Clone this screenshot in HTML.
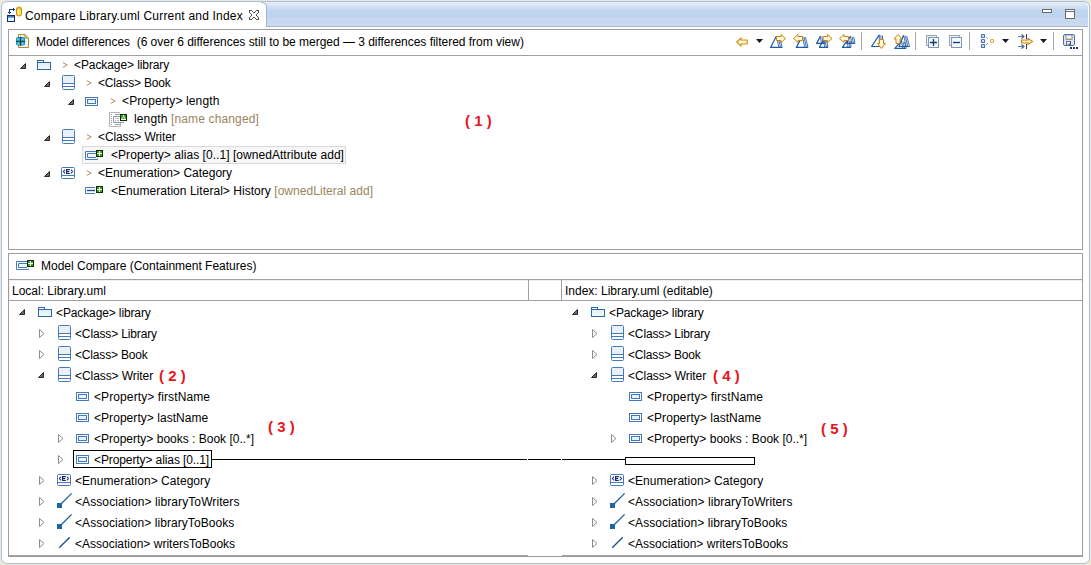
<!DOCTYPE html><html><head><meta charset="utf-8"><style>
html,body{margin:0;padding:0;}
body{width:1091px;height:565px;position:relative;overflow:hidden;background:#ECE9D8;}
.frame{position:absolute;left:1px;top:1px;width:1087px;height:561px;border:1px solid #A9BFE6;border-radius:6px;background:#fff;}
.tabbar{position:absolute;left:262px;top:2px;width:826px;height:24px;border-bottom:1px solid #a9b6cc;border-top-right-radius:5px;background:linear-gradient(#e6eef9 0px,#d6e3f5 4px,#bfd4ef 9px,#bdd3ee 15px,#c8d8f0 16px,#c9d9f1 24px);}
.t{position:absolute;font-family:"Liberation Sans",sans-serif;font-size:12px;line-height:14px;white-space:pre;color:#000;}
.title{font-size:12px;}
.gt{color:#b98a4a;}
.dec{color:#9a8560;}
.r{position:absolute;box-sizing:content-box;}
.i{position:absolute;overflow:visible;}
.ann{position:absolute;font-family:"Liberation Sans",sans-serif;font-weight:bold;font-size:15px;line-height:17px;white-space:pre;color:#E8141C;}
</style></head><body><div class="frame"></div>
<div class="tabbar"></div>
<svg class="i" style="left:258px;top:2px" width="10" height="26" viewBox="0 0 10 26" ><path d="M0 0 H3 Q8 0 8 5 V25 H0 Z" fill="#fff"/><path d="M3 0.5 Q8.5 0.5 8.5 5 V24.5" fill="none" stroke="#a3b4cf" stroke-width="1"/></svg>
<svg class="i" style="left:7px;top:7px" width="16" height="16" viewBox="0 0 16 16" ><path d="M6 1h1v1h-1zM2 2h1v1h-1zM3 2h1v1h-1zM4 2h1v1h-1zM5 2h1v1h-1zM6 2h1v1h-1zM7 2h1v1h-1zM2 3h1v1h-1zM6 3h1v1h-1zM2 4h1v1h-1zM1 5h1v1h-1zM2 5h1v1h-1zM3 5h1v1h-1zM2 6h1v1h-1z" fill="#1238a0" shape-rendering="crispEdges"/><rect x="0.5" y="8.5" width="7" height="6" fill="#e2f6ff" stroke="#1c2c6a"/><rect x="1" y="9" width="6" height="1.6" fill="#3f78d0"/><rect x="9.5" y="0.2" width="5" height="8.6" rx="1.6" fill="#fbe15a" stroke="#c98a12"/><path d="M10 1.8h4" stroke="#d89a20" stroke-width="0.8"/><path d="M11.5 3v4.5" stroke="#fff6b0" stroke-width="1"/></svg>
<div class="t title" style="left:25px;top:9px;letter-spacing:0.2px">Compare Library.uml Current and Index</div>
<svg class="i" style="left:249px;top:10px" width="10" height="10" viewBox="0 0 10 10" ><path d="M0 0h1v1h-1zM1 0h1v1h-1zM2 0h1v1h-1zM7 0h1v1h-1zM8 0h1v1h-1zM9 0h1v1h-1zM0 1h1v1h-1zM3 1h1v1h-1zM6 1h1v1h-1zM9 1h1v1h-1zM0 2h1v1h-1zM4 2h1v1h-1zM5 2h1v1h-1zM9 2h1v1h-1zM1 3h1v1h-1zM8 3h1v1h-1zM2 4h1v1h-1zM7 4h1v1h-1zM2 5h1v1h-1zM7 5h1v1h-1zM1 6h1v1h-1zM8 6h1v1h-1zM0 7h1v1h-1zM4 7h1v1h-1zM5 7h1v1h-1zM9 7h1v1h-1zM0 8h1v1h-1zM3 8h1v1h-1zM6 8h1v1h-1zM9 8h1v1h-1zM0 9h1v1h-1zM1 9h1v1h-1zM2 9h1v1h-1zM7 9h1v1h-1zM8 9h1v1h-1zM9 9h1v1h-1z" fill="#555" shape-rendering="crispEdges"/></svg>
<div class="r" style="left:1042px;top:9px;width:8px;height:2px;border:1px solid #6a6a6a;background:#fff"></div>
<div class="r" style="left:1065px;top:9px;width:8px;height:8px;border:1px solid #6a6a6a;background:#fff"></div>
<div class="r" style="left:1066px;top:11px;width:8px;height:1px;background:#6a6a6a"></div>
<div class="r" style="left:8px;top:29px;width:1073px;height:219px;border:1px solid #9c9c9c;background:#fff"></div>
<div class="r" style="left:9px;top:55px;width:1073px;height:1px;background:#a0a0a0"></div>
<svg class="i" style="left:15px;top:34px" width="16" height="15" viewBox="0 0 16 15" ><path d="M3.5 0.5 H10 L13.5 4 V13.5 H3.5 Z" fill="#eef2fa" stroke="#b38a32"/><path d="M10 0.5 V4 H13.5" fill="#e6c880" stroke="#b38a32"/><rect x="1" y="3" width="9" height="8.6" rx="1.8" fill="#1b93ad"/><rect x="2.3" y="4.3" width="2.2" height="2.2" fill="#6fcde2"/><rect x="6.5" y="4.3" width="2.2" height="2.2" fill="#6fcde2"/><rect x="2.3" y="8.4" width="2.2" height="2.2" fill="#6fcde2"/><rect x="6.5" y="8.4" width="2.2" height="2.2" fill="#6fcde2"/><path d="M5.5 2.6v9.4M0.8 7.4h9.4" stroke="#1d3550" stroke-width="0.9"/></svg>
<div class="t" style="left:36px;top:35px;letter-spacing:-0.025px">Model differences  (6 over 6 differences still to be merged — 3 differences filtered from view)</div>
<svg class="i" style="left:736px;top:37px" width="12" height="10" viewBox="0 0 12 10" ><path d="M0.8 5 L5 0.8 V3 H11.2 V7 H5 V9.2 Z" fill="#fff3c8" stroke="#cf8a18" stroke-width="1.1" stroke-linejoin="round"/></svg>
<svg class="i" style="left:756px;top:39px" width="7" height="4" viewBox="0 0 7 4" ><path d="M0 0 H7 L3.5 4 Z" fill="#1a1a1a"/></svg>
<svg class="i" style="left:770px;top:34px" width="17" height="15" viewBox="0 0 17 15" ><path d="M6.3 2.2 L0.6 13.4 H12.2" fill="none" stroke="#1f5aa6" stroke-width="1.2" stroke-linejoin="round"/><path d="M6.3 2.2 L9.0 13.4" stroke="#1f5aa6" stroke-width="0.85"/><path d="M7.9 2.6 L10.6 13.4" stroke="#1f5aa6" stroke-width="0.85"/><path d="M9.5 3.0 L12.2 13.4" stroke="#1f5aa6" stroke-width="0.85"/><path d="M6.5 2.5 H11 V0.5 L15.5 4.5 L11 8.5 V6.5 H6.5 Z" fill="#fff6d6" stroke="#c98412" stroke-width="1.0" stroke-linejoin="miter"/></svg>
<svg class="i" style="left:793px;top:34px" width="17" height="15" viewBox="0 0 17 15" ><path d="M9.3 2.2 L3.3 13.4 H15" fill="none" stroke="#1f5aa6" stroke-width="1.2" stroke-linejoin="round"/><path d="M9.3 2.2 L11.8 13.4" stroke="#1f5aa6" stroke-width="0.85"/><path d="M10.9 2.6 L13.4 13.4" stroke="#1f5aa6" stroke-width="0.85"/><path d="M12.5 3.0 L15.0 13.4" stroke="#1f5aa6" stroke-width="0.85"/><path d="M9.5 2.5 H5 V0.5 L0.5 4.5 L5 8.5 V6.5 H9.5 Z" fill="#fff6d6" stroke="#c98412" stroke-width="1.0" stroke-linejoin="miter"/></svg>
<svg class="i" style="left:816px;top:34px" width="17" height="15" viewBox="0 0 17 15" ><path d="M4.4 2.2 L0.6 9.4 H8.6" fill="none" stroke="#1f5aa6" stroke-width="1.2" stroke-linejoin="round"/><path d="M4.4 2.2 L5.3999999999999995 9.4" stroke="#1f5aa6" stroke-width="0.85"/><path d="M6.0 2.6 L7.0 9.4" stroke="#1f5aa6" stroke-width="0.85"/><path d="M7.6000000000000005 3.0 L8.6 9.4" stroke="#1f5aa6" stroke-width="0.85"/><path d="M7.4 6.2 L3.4 13.4 H12" fill="none" stroke="#1f5aa6" stroke-width="1.2" stroke-linejoin="round"/><path d="M7.4 6.2 L8.8 13.4" stroke="#1f5aa6" stroke-width="0.85"/><path d="M9.0 6.6000000000000005 L10.4 13.4" stroke="#1f5aa6" stroke-width="0.85"/><path d="M10.600000000000001 7.0 L12.0 13.4" stroke="#1f5aa6" stroke-width="0.85"/><path d="M7.0 2.5 H11.5 V0.5 L16.0 4.5 L11.5 8.5 V6.5 H7.0 Z" fill="#fff6d6" stroke="#c98412" stroke-width="1.0" stroke-linejoin="miter"/></svg>
<svg class="i" style="left:839px;top:34px" width="17" height="15" viewBox="0 0 17 15" ><path d="M11.5 2.2 L7.5 9.4 H16" fill="none" stroke="#1f5aa6" stroke-width="1.2" stroke-linejoin="round"/><path d="M11.5 2.2 L12.8 9.4" stroke="#1f5aa6" stroke-width="0.85"/><path d="M13.1 2.6 L14.4 9.4" stroke="#1f5aa6" stroke-width="0.85"/><path d="M14.7 3.0 L16.0 9.4" stroke="#1f5aa6" stroke-width="0.85"/><path d="M8.5 6.2 L3.4 13.4 H12" fill="none" stroke="#1f5aa6" stroke-width="1.2" stroke-linejoin="round"/><path d="M8.5 6.2 L8.8 13.4" stroke="#1f5aa6" stroke-width="0.85"/><path d="M10.1 6.6000000000000005 L10.4 13.4" stroke="#1f5aa6" stroke-width="0.85"/><path d="M11.7 7.0 L12.0 13.4" stroke="#1f5aa6" stroke-width="0.85"/><path d="M9.5 2.5 H5 V0.5 L0.5 4.5 L5 8.5 V6.5 H9.5 Z" fill="#fff6d6" stroke="#c98412" stroke-width="1.0" stroke-linejoin="miter"/></svg>
<div class="r" style="left:861px;top:32px;width:1px;height:18px;background:#a8a8a8"></div>
<svg class="i" style="left:871px;top:34px" width="16" height="16" viewBox="0 0 16 16" ><path d="M8.3 0.8 L0.6 12.5 H11.5" fill="none" stroke="#1f5aa6" stroke-width="1.2" stroke-linejoin="round"/><path d="M8.3 0.8 L8.3 12.5" stroke="#1f5aa6" stroke-width="0.85"/><path d="M9.9 1.2000000000000002 L9.9 12.5" stroke="#1f5aa6" stroke-width="0.85"/><path d="M11.5 1.6 L11.5 12.5" stroke="#1f5aa6" stroke-width="0.85"/><path d="M8.5 5.5 V9.5 H6.5 L10.5 14.5 L14.5 9.5 H12.5 V5.5 Z" fill="#fff6d6" stroke="#c98412" stroke-width="1.0"/></svg>
<svg class="i" style="left:893px;top:34px" width="17" height="16" viewBox="0 0 17 16" ><path d="M10.5 1.2 L6 12.5 H16.5" fill="none" stroke="#1f5aa6" stroke-width="1.2" stroke-linejoin="round"/><path d="M10.5 1.2 L13.3 12.5" stroke="#1f5aa6" stroke-width="0.85"/><path d="M12.1 1.6 L14.9 12.5" stroke="#1f5aa6" stroke-width="0.85"/><path d="M13.7 2.0 L16.5 12.5" stroke="#1f5aa6" stroke-width="0.85"/><path d="M8.3 7.2 L1.8 14.3 H13.2" fill="none" stroke="#1f5aa6" stroke-width="1.2" stroke-linejoin="round"/><path d="M8.3 7.2 L10.0 14.3" stroke="#1f5aa6" stroke-width="0.85"/><path d="M9.9 7.6000000000000005 L11.6 14.3" stroke="#1f5aa6" stroke-width="0.85"/><path d="M11.5 8.0 L13.2 14.3" stroke="#1f5aa6" stroke-width="0.85"/><path d="M3.0 9.5 V5 H1.0 L5.0 0.5 L9.0 5 H7.0 V9.5 Z" fill="#fff6d6" stroke="#c98412" stroke-width="1.0"/></svg>
<div class="r" style="left:915px;top:32px;width:1px;height:18px;background:#a8a8a8"></div>
<svg class="i" style="left:926px;top:35px" width="14" height="14" viewBox="0 0 14 14" ><rect x="0.5" y="0.5" width="10" height="10" fill="#e6f5fc" stroke="#98a6bc"/><rect x="2.5" y="2.5" width="10" height="10" fill="#effafe" stroke="#8794aa"/><path d="M4 7.5h7M7.5 4v7" stroke="#0c3c74" stroke-width="1.3"/></svg>
<svg class="i" style="left:949px;top:35px" width="14" height="14" viewBox="0 0 14 14" ><rect x="0.5" y="0.5" width="10" height="10" fill="#e6f5fc" stroke="#98a6bc"/><rect x="2.5" y="2.5" width="10" height="10" fill="#effafe" stroke="#8794aa"/><path d="M4 7.5h7" stroke="#0c3c74" stroke-width="1.3"/></svg>
<div class="r" style="left:969px;top:32px;width:1px;height:18px;background:#a8a8a8"></div>
<svg class="i" style="left:981px;top:34px" width="14" height="14" viewBox="0 0 14 14" ><rect x="0.5" y="0.5" width="3" height="3" rx="0.6" fill="#d8eef0" stroke="#4a72b0" stroke-width="1.2"/><rect x="0.5" y="5.5" width="3" height="3" rx="0.6" fill="#d8eef0" stroke="#4a72b0" stroke-width="1.2"/><rect x="0.5" y="10.5" width="3" height="3" rx="0.6" fill="#d8eef0" stroke="#4a72b0" stroke-width="1.2"/><path d="M5 3 L7.5 5.5 M5 11 L7.5 8.5" stroke="#4a72b0" stroke-width="0.9" stroke-dasharray="1 0.8"/><rect x="9.5" y="5.5" width="3" height="3" rx="1" fill="#fff4c0" stroke="#c8940c"/></svg>
<svg class="i" style="left:1002px;top:39px" width="7" height="4" viewBox="0 0 7 4" ><path d="M0 0 H7 L3.5 4 Z" fill="#1a1a1a"/></svg>
<svg class="i" style="left:1018px;top:34px" width="16" height="16" viewBox="0 0 16 16" ><path d="M0 2.5h5" stroke="#3b8ad0" stroke-width="1"/><path d="M3.5 0.5 L6 2.5 L3.5 4.5" fill="none" stroke="#505a68" stroke-width="1.1"/><path d="M8.5 0v5" stroke="#2a3a60" stroke-width="1"/><path d="M0 12.5h5" stroke="#3b8ad0" stroke-width="1"/><path d="M3.5 10.5 L6 12.5 L3.5 14.5" fill="none" stroke="#505a68" stroke-width="1.1"/><path d="M8.5 10v5" stroke="#2a3a60" stroke-width="1"/><path d="M3.5 6 H10 V4.5 L14.5 7.5 L10 10.5 V9 H3.5 Z" fill="#fff1c2" stroke="#c98412" stroke-width="1.1"/></svg>
<svg class="i" style="left:1040px;top:39px" width="7" height="4" viewBox="0 0 7 4" ><path d="M0 0 H7 L3.5 4 Z" fill="#1a1a1a"/></svg>
<div class="r" style="left:1053px;top:32px;width:1px;height:18px;background:#a8a8a8"></div>
<svg class="i" style="left:1063px;top:34px" width="16" height="16" viewBox="0 0 16 16" ><rect x="0.5" y="0.5" width="11" height="11" rx="1.5" fill="#dfe6f2" stroke="#5572a8"/><rect x="3" y="1" width="6" height="4.5" fill="#f4f8fc" stroke="#6a7890" stroke-width="0.8"/><rect x="3.3" y="4" width="5.4" height="1.2" fill="#f0c870"/><rect x="3" y="7" width="5" height="4.5" fill="#3a5a98"/><rect x="3.8" y="7.8" width="3" height="2" fill="#fff"/><rect x="3.8" y="9.8" width="2" height="1.2" fill="#f0c870"/><rect x="7" y="13" width="2" height="2" fill="#1e3a78"/><rect x="10" y="13" width="2" height="2" fill="#1e3a78"/><rect x="13" y="13" width="2" height="2" fill="#1e3a78"/></svg>
<svg class="i" style="left:20px;top:63px" width="6" height="6" viewBox="0 0 6 6" ><path d="M5.5 0.5 L5.5 5.5 L0.5 5.5 Z" fill="#6a6a6a" stroke="#2a2a2a" stroke-width="1" stroke-linejoin="round"/></svg>
<svg class="i" style="left:37px;top:60px" width="14" height="10" viewBox="0 0 14 10" ><defs><linearGradient id="fg" x1="0" y1="0" x2="0" y2="1"><stop offset="0" stop-color="#dfeefb"/><stop offset="1" stop-color="#f2f8fd"/></linearGradient></defs><rect x="0.5" y="0.5" width="6" height="2" fill="#fff" stroke="#2d69a8"/><rect x="0.5" y="2.5" width="13" height="7" fill="url(#fg)" stroke="#2d69a8"/></svg>
<svg class="i" style="left:62px;top:62px" width="6" height="6" viewBox="0 0 6 6" ><path d="M0.8 0.6 L5.2 3 L0.8 5.4" fill="none" stroke="#a8763e" stroke-width="0.85"/></svg>
<div class="t" style="left:74px;top:58px;letter-spacing:-0.09px;">&lt;Package&gt; library</div>
<svg class="i" style="left:44px;top:81px" width="6" height="6" viewBox="0 0 6 6" ><path d="M5.5 0.5 L5.5 5.5 L0.5 5.5 Z" fill="#6a6a6a" stroke="#2a2a2a" stroke-width="1" stroke-linejoin="round"/></svg>
<svg class="i" style="left:62px;top:75px" width="13" height="15" viewBox="0 0 13 15" ><rect x="0.5" y="0.5" width="12" height="14" rx="1" fill="#fff" stroke="#4679BA"/><rect x="1" y="1" width="11" height="7" fill="#e9f0f8"/><path d="M0.5 8.5h12M0.5 11.5h12" stroke="#4679BA"/></svg>
<svg class="i" style="left:86px;top:80px" width="6" height="6" viewBox="0 0 6 6" ><path d="M0.8 0.6 L5.2 3 L0.8 5.4" fill="none" stroke="#a8763e" stroke-width="0.85"/></svg>
<div class="t" style="left:98px;top:76px;letter-spacing:-0.17px;">&lt;Class&gt; Book</div>
<svg class="i" style="left:68px;top:99px" width="6" height="6" viewBox="0 0 6 6" ><path d="M5.5 0.5 L5.5 5.5 L0.5 5.5 Z" fill="#6a6a6a" stroke="#2a2a2a" stroke-width="1" stroke-linejoin="round"/></svg>
<svg class="i" style="left:85px;top:97px" width="13" height="9" viewBox="0 0 13 9" ><rect x="0.5" y="0.5" width="12" height="8" fill="#fff" stroke="#4679BA"/><rect x="2.5" y="2.5" width="8" height="4" fill="#e6f4fb" stroke="#4679BA"/></svg>
<svg class="i" style="left:110px;top:98px" width="6" height="6" viewBox="0 0 6 6" ><path d="M0.8 0.6 L5.2 3 L0.8 5.4" fill="none" stroke="#a8763e" stroke-width="0.85"/></svg>
<div class="t" style="left:122px;top:94px;letter-spacing:0.12px;">&lt;Property&gt; length</div>
<svg class="i" style="left:109px;top:112px" width="18" height="15" viewBox="0 0 18 15" ><path d="M0.5 14.5 V0.5 H11" fill="none" stroke="#b4b4b4"/><path d="M0.5 14.5 H11.5 V11" fill="none" stroke="#b4b4b4"/><path d="M2 2.5h1M2 4.5h1M2 6.5h1M2 8.5h1M2 10.5h1M2 12.5h1" stroke="#8f9aa8"/><path d="M6 2.5h5M6 12.5h5" stroke="#9aa4b0"/><path d="M15 10.5 H4.5 V4.5 H11" fill="none" stroke="#8f98a4"/><path d="M6 6.5h1M8 6.5h2M6 8.5h1M8 8.5h2" stroke="#a8b0bc"/><rect x="11.5" y="2.5" width="6" height="6" fill="#3f9c18" stroke="#063000"/><rect x="14" y="3" width="1" height="1.2" fill="#fff"/><path d="M14.5 4.5 L12.8 6.8 M14.5 4.5 L16.2 6.8" stroke="#fff" stroke-width="0.9"/><path d="M12 7.5h5" stroke="#fff"/></svg>
<div class="t" style="left:134px;top:112px;letter-spacing:0.14px;">length <span class="dec">[name changed]</span></div>
<svg class="i" style="left:44px;top:135px" width="6" height="6" viewBox="0 0 6 6" ><path d="M5.5 0.5 L5.5 5.5 L0.5 5.5 Z" fill="#6a6a6a" stroke="#2a2a2a" stroke-width="1" stroke-linejoin="round"/></svg>
<svg class="i" style="left:62px;top:129px" width="13" height="15" viewBox="0 0 13 15" ><rect x="0.5" y="0.5" width="12" height="14" rx="1" fill="#fff" stroke="#4679BA"/><rect x="1" y="1" width="11" height="7" fill="#e9f0f8"/><path d="M0.5 8.5h12M0.5 11.5h12" stroke="#4679BA"/></svg>
<svg class="i" style="left:86px;top:134px" width="6" height="6" viewBox="0 0 6 6" ><path d="M0.8 0.6 L5.2 3 L0.8 5.4" fill="none" stroke="#a8763e" stroke-width="0.85"/></svg>
<div class="t" style="left:98px;top:130px;letter-spacing:-0.11px;">&lt;Class&gt; Writer</div>
<div class="r" style="left:82px;top:146px;width:262px;height:16px;border:1px solid #d9d9d9;background:#f7f7f7"></div>
<svg class="i" style="left:85px;top:150px" width="18" height="11" viewBox="0 0 18 11" ><path d="M11 1.5 H0.5 V9.5 H12.5 V8.5" fill="none" stroke="#4679BA"/><path d="M11 3.5 H2.5 V7.5 H11" fill="#eef6fb" stroke="#4679BA"/><rect x="11.5" y="0.5" width="6" height="6" fill="#3f9c18" stroke="#063000"/><path d="M14 1h1v5h-1zM12 3h5v1h-5z" fill="#fff" shape-rendering="crispEdges"/></svg>
<div class="t" style="left:111px;top:148px;letter-spacing:0.05px;">&lt;Property&gt; alias [0..1] [ownedAttribute add]</div>
<svg class="i" style="left:44px;top:171px" width="6" height="6" viewBox="0 0 6 6" ><path d="M5.5 0.5 L5.5 5.5 L0.5 5.5 Z" fill="#6a6a6a" stroke="#2a2a2a" stroke-width="1" stroke-linejoin="round"/></svg>
<svg class="i" style="left:61px;top:167px" width="14" height="12" viewBox="0 0 14 12" ><rect x="0.5" y="0.5" width="13" height="11" rx="1" fill="#fff" stroke="#4679BA"/><path d="M0.5 8.5h13" stroke="#4679BA"/><path d="M5 2.6h3.8M5 4.6h3.3M5 6.5h3.8M5.6 2v5" stroke="#1c2466" stroke-width="1.15"/><path d="M4 2.6 L2.4 4.5 L4 6.4 M9.9 2.6 L11.5 4.5 L9.9 6.4" fill="none" stroke="#243a80" stroke-width="1.1"/></svg>
<svg class="i" style="left:86px;top:170px" width="6" height="6" viewBox="0 0 6 6" ><path d="M0.8 0.6 L5.2 3 L0.8 5.4" fill="none" stroke="#a8763e" stroke-width="0.85"/></svg>
<div class="t" style="left:98px;top:166px;">&lt;Enumeration&gt; Category</div>
<svg class="i" style="left:85px;top:186px" width="18" height="9" viewBox="0 0 18 9" ><path d="M10 1.5 H0.5 V7.5 H10" fill="none" stroke="#4679BA"/><path d="M2 4.5 H10" stroke="#1f4f8a" stroke-width="1.4"/><rect x="11.5" y="0.5" width="6" height="6" fill="#3f9c18" stroke="#063000"/><path d="M14 1h1v5h-1zM12 3h5v1h-5z" fill="#fff" shape-rendering="crispEdges"/></svg>
<div class="t" style="left:111px;top:184px;letter-spacing:0.04px;">&lt;Enumeration Literal&gt; History <span class="dec">[ownedLiteral add]</span></div>
<div class="ann" style="left:465px;top:112px">( 1 )</div>
<div class="r" style="left:8px;top:253px;width:1073px;height:302px;border:1px solid #9c9c9c;border-bottom:1px solid #9a9a9a;background:#fff"></div>
<svg class="i" style="left:16px;top:260px" width="18" height="11" viewBox="0 0 18 11" ><path d="M11 1.5 H0.5 V9.5 H12.5 V8.5" fill="none" stroke="#4679BA"/><path d="M11 3.5 H2.5 V7.5 H11" fill="#eef6fb" stroke="#4679BA"/><rect x="11.5" y="0.5" width="6" height="6" fill="#3f9c18" stroke="#063000"/><path d="M14 1h1v5h-1zM12 3h5v1h-5z" fill="#fff" shape-rendering="crispEdges"/></svg>
<div class="t" style="left:41px;top:259px;">Model Compare (Containment Features)</div>
<div class="r" style="left:9px;top:279px;width:1073px;height:1px;background:#a0a0a0"></div>
<div class="r" style="left:9px;top:300px;width:1073px;height:1px;background:#a0a0a0"></div>
<div class="r" style="left:9px;top:280px;width:1073px;height:1px;background:#eeeeee"></div>
<div class="r" style="left:9px;top:280px;width:1px;height:20px;background:#f0f0f0"></div>
<div class="r" style="left:528px;top:280px;width:1px;height:20px;background:#a0a0a0"></div>
<div class="r" style="left:561px;top:280px;width:1px;height:20px;background:#a0a0a0"></div>
<div class="t" style="left:12px;top:284px;">Local: Library.uml</div>
<div class="t" style="left:565px;top:284px;">Index: Library.uml (editable)</div>
<div class="r" style="left:9px;top:555px;width:519px;height:1px;background:#a4a4a8"></div>
<div class="r" style="left:562px;top:555px;width:520px;height:1px;background:#a4a4a8"></div>
<svg class="i" style="left:19px;top:309px" width="6" height="6" viewBox="0 0 6 6" ><path d="M5.5 0.5 L5.5 5.5 L0.5 5.5 Z" fill="#6a6a6a" stroke="#2a2a2a" stroke-width="1" stroke-linejoin="round"/></svg>
<svg class="i" style="left:38px;top:307px" width="14" height="10" viewBox="0 0 14 10" ><defs><linearGradient id="fg" x1="0" y1="0" x2="0" y2="1"><stop offset="0" stop-color="#dfeefb"/><stop offset="1" stop-color="#f2f8fd"/></linearGradient></defs><rect x="0.5" y="0.5" width="6" height="2" fill="#fff" stroke="#2d69a8"/><rect x="0.5" y="2.5" width="13" height="7" fill="url(#fg)" stroke="#2d69a8"/></svg>
<div class="t" style="left:56px;top:306px;letter-spacing:-0.12px;">&lt;Package&gt; library</div>
<svg class="i" style="left:39px;top:329px" width="6" height="9" viewBox="0 0 6 9" ><path d="M0.5 0.5 L5 4.5 L0.5 8.5 Z" fill="none" stroke="#8c8c8c" stroke-width="1"/></svg>
<svg class="i" style="left:58px;top:325px" width="13" height="15" viewBox="0 0 13 15" ><rect x="0.5" y="0.5" width="12" height="14" rx="1" fill="#fff" stroke="#4679BA"/><rect x="1" y="1" width="11" height="7" fill="#e9f0f8"/><path d="M0.5 8.5h12M0.5 11.5h12" stroke="#4679BA"/></svg>
<div class="t" style="left:75px;top:327px;letter-spacing:-0.14px;">&lt;Class&gt; Library</div>
<svg class="i" style="left:39px;top:350px" width="6" height="9" viewBox="0 0 6 9" ><path d="M0.5 0.5 L5 4.5 L0.5 8.5 Z" fill="none" stroke="#8c8c8c" stroke-width="1"/></svg>
<svg class="i" style="left:58px;top:346px" width="13" height="15" viewBox="0 0 13 15" ><rect x="0.5" y="0.5" width="12" height="14" rx="1" fill="#fff" stroke="#4679BA"/><rect x="1" y="1" width="11" height="7" fill="#e9f0f8"/><path d="M0.5 8.5h12M0.5 11.5h12" stroke="#4679BA"/></svg>
<div class="t" style="left:75px;top:348px;letter-spacing:-0.17px;">&lt;Class&gt; Book</div>
<svg class="i" style="left:38px;top:372px" width="6" height="6" viewBox="0 0 6 6" ><path d="M5.5 0.5 L5.5 5.5 L0.5 5.5 Z" fill="#6a6a6a" stroke="#2a2a2a" stroke-width="1" stroke-linejoin="round"/></svg>
<svg class="i" style="left:58px;top:367px" width="13" height="15" viewBox="0 0 13 15" ><rect x="0.5" y="0.5" width="12" height="14" rx="1" fill="#fff" stroke="#4679BA"/><rect x="1" y="1" width="11" height="7" fill="#e9f0f8"/><path d="M0.5 8.5h12M0.5 11.5h12" stroke="#4679BA"/></svg>
<div class="t" style="left:75px;top:369px;letter-spacing:-0.07px;">&lt;Class&gt; Writer</div>
<svg class="i" style="left:76px;top:392px" width="13" height="9" viewBox="0 0 13 9" ><rect x="0.5" y="0.5" width="12" height="8" fill="#fff" stroke="#4679BA"/><rect x="2.5" y="2.5" width="8" height="4" fill="#e6f4fb" stroke="#4679BA"/></svg>
<div class="t" style="left:94px;top:390px;letter-spacing:0.1px;">&lt;Property&gt; firstName</div>
<svg class="i" style="left:76px;top:413px" width="13" height="9" viewBox="0 0 13 9" ><rect x="0.5" y="0.5" width="12" height="8" fill="#fff" stroke="#4679BA"/><rect x="2.5" y="2.5" width="8" height="4" fill="#e6f4fb" stroke="#4679BA"/></svg>
<div class="t" style="left:94px;top:411px;letter-spacing:0.05px;">&lt;Property&gt; lastName</div>
<svg class="i" style="left:58px;top:434px" width="6" height="9" viewBox="0 0 6 9" ><path d="M0.5 0.5 L5 4.5 L0.5 8.5 Z" fill="none" stroke="#8c8c8c" stroke-width="1"/></svg>
<svg class="i" style="left:76px;top:434px" width="13" height="9" viewBox="0 0 13 9" ><rect x="0.5" y="0.5" width="12" height="8" fill="#fff" stroke="#4679BA"/><rect x="2.5" y="2.5" width="8" height="4" fill="#e6f4fb" stroke="#4679BA"/></svg>
<div class="t" style="left:94px;top:432px;">&lt;Property&gt; books : Book [0..*]</div>
<svg class="i" style="left:58px;top:455px" width="6" height="9" viewBox="0 0 6 9" ><path d="M0.5 0.5 L5 4.5 L0.5 8.5 Z" fill="none" stroke="#8c8c8c" stroke-width="1"/></svg>
<svg class="i" style="left:76px;top:455px" width="13" height="9" viewBox="0 0 13 9" ><rect x="0.5" y="0.5" width="12" height="8" fill="#fff" stroke="#4679BA"/><rect x="2.5" y="2.5" width="8" height="4" fill="#e6f4fb" stroke="#4679BA"/></svg>
<div class="t" style="left:94px;top:453px;letter-spacing:-0.1px;">&lt;Property&gt; alias [0..1]</div>
<svg class="i" style="left:39px;top:476px" width="6" height="9" viewBox="0 0 6 9" ><path d="M0.5 0.5 L5 4.5 L0.5 8.5 Z" fill="none" stroke="#8c8c8c" stroke-width="1"/></svg>
<svg class="i" style="left:57px;top:474px" width="14" height="12" viewBox="0 0 14 12" ><rect x="0.5" y="0.5" width="13" height="11" rx="1" fill="#fff" stroke="#4679BA"/><path d="M0.5 8.5h13" stroke="#4679BA"/><path d="M5 2.6h3.8M5 4.6h3.3M5 6.5h3.8M5.6 2v5" stroke="#1c2466" stroke-width="1.15"/><path d="M4 2.6 L2.4 4.5 L4 6.4 M9.9 2.6 L11.5 4.5 L9.9 6.4" fill="none" stroke="#243a80" stroke-width="1.1"/></svg>
<div class="t" style="left:75px;top:474px;letter-spacing:0.05px;">&lt;Enumeration&gt; Category</div>
<svg class="i" style="left:39px;top:497px" width="6" height="9" viewBox="0 0 6 9" ><path d="M0.5 0.5 L5 4.5 L0.5 8.5 Z" fill="none" stroke="#8c8c8c" stroke-width="1"/></svg>
<svg class="i" style="left:56px;top:493px" width="17" height="16" viewBox="0 0 17 16" ><path d="M5.2 10.8 L15.6 0.4" stroke="#1a5c9e" stroke-width="1.25"/><rect x="1" y="10" width="5" height="5" fill="#1f62a6"/></svg>
<div class="t" style="left:75px;top:495px;letter-spacing:0.09px;">&lt;Association&gt; libraryToWriters</div>
<svg class="i" style="left:39px;top:518px" width="6" height="9" viewBox="0 0 6 9" ><path d="M0.5 0.5 L5 4.5 L0.5 8.5 Z" fill="none" stroke="#8c8c8c" stroke-width="1"/></svg>
<svg class="i" style="left:56px;top:514px" width="17" height="16" viewBox="0 0 17 16" ><path d="M5.2 10.8 L15.6 0.4" stroke="#1a5c9e" stroke-width="1.25"/><rect x="1" y="10" width="5" height="5" fill="#1f62a6"/></svg>
<div class="t" style="left:75px;top:516px;letter-spacing:0.07px;">&lt;Association&gt; libraryToBooks</div>
<svg class="i" style="left:39px;top:539px" width="6" height="9" viewBox="0 0 6 9" ><path d="M0.5 0.5 L5 4.5 L0.5 8.5 Z" fill="none" stroke="#8c8c8c" stroke-width="1"/></svg>
<svg class="i" style="left:56px;top:535px" width="17" height="16" viewBox="0 0 17 16" ><path d="M3.2 12.8 L13.8 2.2" stroke="#0f4f90" stroke-width="1.3"/></svg>
<div class="t" style="left:75px;top:537px;">&lt;Association&gt; writersToBooks</div>
<svg class="i" style="left:572px;top:309px" width="6" height="6" viewBox="0 0 6 6" ><path d="M5.5 0.5 L5.5 5.5 L0.5 5.5 Z" fill="#6a6a6a" stroke="#2a2a2a" stroke-width="1" stroke-linejoin="round"/></svg>
<svg class="i" style="left:591px;top:307px" width="14" height="10" viewBox="0 0 14 10" ><defs><linearGradient id="fg" x1="0" y1="0" x2="0" y2="1"><stop offset="0" stop-color="#dfeefb"/><stop offset="1" stop-color="#f2f8fd"/></linearGradient></defs><rect x="0.5" y="0.5" width="6" height="2" fill="#fff" stroke="#2d69a8"/><rect x="0.5" y="2.5" width="13" height="7" fill="url(#fg)" stroke="#2d69a8"/></svg>
<div class="t" style="left:609px;top:306px;letter-spacing:-0.12px;">&lt;Package&gt; library</div>
<svg class="i" style="left:592px;top:329px" width="6" height="9" viewBox="0 0 6 9" ><path d="M0.5 0.5 L5 4.5 L0.5 8.5 Z" fill="none" stroke="#8c8c8c" stroke-width="1"/></svg>
<svg class="i" style="left:611px;top:325px" width="13" height="15" viewBox="0 0 13 15" ><rect x="0.5" y="0.5" width="12" height="14" rx="1" fill="#fff" stroke="#4679BA"/><rect x="1" y="1" width="11" height="7" fill="#e9f0f8"/><path d="M0.5 8.5h12M0.5 11.5h12" stroke="#4679BA"/></svg>
<div class="t" style="left:628px;top:327px;letter-spacing:-0.14px;">&lt;Class&gt; Library</div>
<svg class="i" style="left:592px;top:350px" width="6" height="9" viewBox="0 0 6 9" ><path d="M0.5 0.5 L5 4.5 L0.5 8.5 Z" fill="none" stroke="#8c8c8c" stroke-width="1"/></svg>
<svg class="i" style="left:611px;top:346px" width="13" height="15" viewBox="0 0 13 15" ><rect x="0.5" y="0.5" width="12" height="14" rx="1" fill="#fff" stroke="#4679BA"/><rect x="1" y="1" width="11" height="7" fill="#e9f0f8"/><path d="M0.5 8.5h12M0.5 11.5h12" stroke="#4679BA"/></svg>
<div class="t" style="left:628px;top:348px;letter-spacing:-0.17px;">&lt;Class&gt; Book</div>
<svg class="i" style="left:591px;top:372px" width="6" height="6" viewBox="0 0 6 6" ><path d="M5.5 0.5 L5.5 5.5 L0.5 5.5 Z" fill="#6a6a6a" stroke="#2a2a2a" stroke-width="1" stroke-linejoin="round"/></svg>
<svg class="i" style="left:611px;top:367px" width="13" height="15" viewBox="0 0 13 15" ><rect x="0.5" y="0.5" width="12" height="14" rx="1" fill="#fff" stroke="#4679BA"/><rect x="1" y="1" width="11" height="7" fill="#e9f0f8"/><path d="M0.5 8.5h12M0.5 11.5h12" stroke="#4679BA"/></svg>
<div class="t" style="left:628px;top:369px;letter-spacing:-0.07px;">&lt;Class&gt; Writer</div>
<svg class="i" style="left:629px;top:392px" width="13" height="9" viewBox="0 0 13 9" ><rect x="0.5" y="0.5" width="12" height="8" fill="#fff" stroke="#4679BA"/><rect x="2.5" y="2.5" width="8" height="4" fill="#e6f4fb" stroke="#4679BA"/></svg>
<div class="t" style="left:647px;top:390px;letter-spacing:0.1px;">&lt;Property&gt; firstName</div>
<svg class="i" style="left:629px;top:413px" width="13" height="9" viewBox="0 0 13 9" ><rect x="0.5" y="0.5" width="12" height="8" fill="#fff" stroke="#4679BA"/><rect x="2.5" y="2.5" width="8" height="4" fill="#e6f4fb" stroke="#4679BA"/></svg>
<div class="t" style="left:647px;top:411px;letter-spacing:0.05px;">&lt;Property&gt; lastName</div>
<svg class="i" style="left:611px;top:434px" width="6" height="9" viewBox="0 0 6 9" ><path d="M0.5 0.5 L5 4.5 L0.5 8.5 Z" fill="none" stroke="#8c8c8c" stroke-width="1"/></svg>
<svg class="i" style="left:629px;top:434px" width="13" height="9" viewBox="0 0 13 9" ><rect x="0.5" y="0.5" width="12" height="8" fill="#fff" stroke="#4679BA"/><rect x="2.5" y="2.5" width="8" height="4" fill="#e6f4fb" stroke="#4679BA"/></svg>
<div class="t" style="left:647px;top:432px;">&lt;Property&gt; books : Book [0..*]</div>
<svg class="i" style="left:592px;top:476px" width="6" height="9" viewBox="0 0 6 9" ><path d="M0.5 0.5 L5 4.5 L0.5 8.5 Z" fill="none" stroke="#8c8c8c" stroke-width="1"/></svg>
<svg class="i" style="left:610px;top:474px" width="14" height="12" viewBox="0 0 14 12" ><rect x="0.5" y="0.5" width="13" height="11" rx="1" fill="#fff" stroke="#4679BA"/><path d="M0.5 8.5h13" stroke="#4679BA"/><path d="M5 2.6h3.8M5 4.6h3.3M5 6.5h3.8M5.6 2v5" stroke="#1c2466" stroke-width="1.15"/><path d="M4 2.6 L2.4 4.5 L4 6.4 M9.9 2.6 L11.5 4.5 L9.9 6.4" fill="none" stroke="#243a80" stroke-width="1.1"/></svg>
<div class="t" style="left:628px;top:474px;letter-spacing:0.05px;">&lt;Enumeration&gt; Category</div>
<svg class="i" style="left:592px;top:497px" width="6" height="9" viewBox="0 0 6 9" ><path d="M0.5 0.5 L5 4.5 L0.5 8.5 Z" fill="none" stroke="#8c8c8c" stroke-width="1"/></svg>
<svg class="i" style="left:609px;top:493px" width="17" height="16" viewBox="0 0 17 16" ><path d="M5.2 10.8 L15.6 0.4" stroke="#1a5c9e" stroke-width="1.25"/><rect x="1" y="10" width="5" height="5" fill="#1f62a6"/></svg>
<div class="t" style="left:628px;top:495px;letter-spacing:0.09px;">&lt;Association&gt; libraryToWriters</div>
<svg class="i" style="left:592px;top:518px" width="6" height="9" viewBox="0 0 6 9" ><path d="M0.5 0.5 L5 4.5 L0.5 8.5 Z" fill="none" stroke="#8c8c8c" stroke-width="1"/></svg>
<svg class="i" style="left:609px;top:514px" width="17" height="16" viewBox="0 0 17 16" ><path d="M5.2 10.8 L15.6 0.4" stroke="#1a5c9e" stroke-width="1.25"/><rect x="1" y="10" width="5" height="5" fill="#1f62a6"/></svg>
<div class="t" style="left:628px;top:516px;letter-spacing:0.07px;">&lt;Association&gt; libraryToBooks</div>
<svg class="i" style="left:592px;top:539px" width="6" height="9" viewBox="0 0 6 9" ><path d="M0.5 0.5 L5 4.5 L0.5 8.5 Z" fill="none" stroke="#8c8c8c" stroke-width="1"/></svg>
<svg class="i" style="left:609px;top:535px" width="17" height="16" viewBox="0 0 17 16" ><path d="M3.2 12.8 L13.8 2.2" stroke="#0f4f90" stroke-width="1.3"/></svg>
<div class="t" style="left:628px;top:537px;">&lt;Association&gt; writersToBooks</div>
<div class="r" style="left:73px;top:450px;width:137px;height:16px;border:1px solid #000"></div>
<div class="r" style="left:212px;top:459px;width:315px;height:1px;background:#000"></div>
<div class="r" style="left:528px;top:459px;width:33px;height:1px;background:#000"></div>
<div class="r" style="left:562px;top:459px;width:63px;height:1px;background:#000"></div>
<div class="r" style="left:625px;top:457px;width:128px;height:6px;border:1px solid #000"></div>
<div class="ann" style="left:159px;top:367px">( 2 )</div>
<div class="ann" style="left:268px;top:418px">( 3 )</div>
<div class="ann" style="left:713px;top:367px">( 4 )</div>
<div class="ann" style="left:821px;top:420px">( 5 )</div></body></html>
